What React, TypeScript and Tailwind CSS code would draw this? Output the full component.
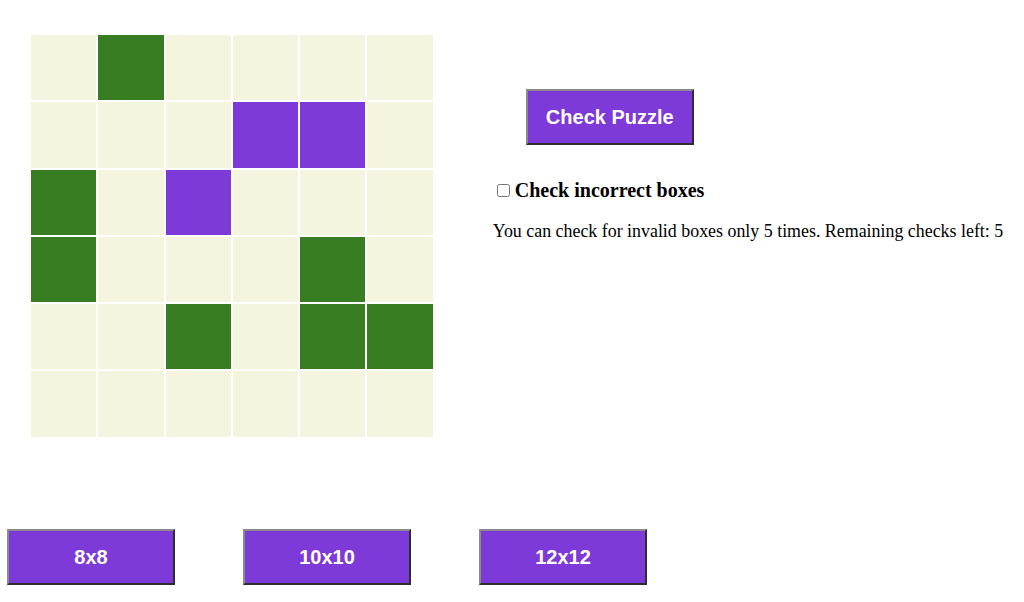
const B = "bg-[#f5f4de]";
const G = "bg-[#387d22]";
const P = "bg-[#7d3ad8]";

const board = [
  ["b", "g", "b", "b", "b", "b"],
  ["b", "b", "b", "p", "p", "b"],
  ["g", "b", "p", "b", "b", "b"],
  ["g", "b", "b", "b", "g", "b"],
  ["b", "b", "g", "b", "g", "g"],
  ["b", "b", "b", "b", "b", "b"],
];

const cellColor = (c: string) => (c === "g" ? G : c === "p" ? P : B);

function PurpleButton({ label }: { label: string }) {
  return (
    <button className="w-[168px] h-[56px] bg-[#7d3ad8] text-white font-bold text-[20px] font-['Liberation_Sans',Arial,sans-serif] border-2 border-t-[#8a8a8a] border-l-[#8a8a8a] border-b-[#2e2e2e] border-r-[#2e2e2e] flex items-center justify-center">
      {label}
    </button>
  );
}

export default function App() {
  return (
    <div className="w-[1024px] h-[602px] bg-white overflow-hidden font-['Liberation_Serif','Times_New_Roman',serif] text-black">
      <div className="flex pt-[35px]">
        <div className="ml-[31px] grid grid-cols-[repeat(6,65.3px)] grid-rows-[repeat(6,65.3px)] gap-[2px]">
          {board.flat().map((c, i) => (
            <div key={i} className={cellColor(c)} />
          ))}
        </div>

        <div className="ml-[60px] pt-[54px] flex flex-col">
          <div className="ml-[33px]">
            <PurpleButton label="Check Puzzle" />
          </div>
          <label className="mt-[34px] flex items-center text-[20px] font-bold leading-[23px]">
            <input type="checkbox" className="w-[13px] h-[13px] ml-[4px] mr-[5px]" />
            Check incorrect boxes
          </label>
          <p className="mt-[19px] text-[17.9px] leading-[21px] whitespace-nowrap">
            You can check for invalid boxes only 5 times. Remaining checks left: 5
          </p>
        </div>
      </div>

      <div className="flex gap-[68px] pl-[7px] mt-[92px]">
        <PurpleButton label="8x8" />
        <PurpleButton label="10x10" />
        <PurpleButton label="12x12" />
      </div>
    </div>
  );
}
